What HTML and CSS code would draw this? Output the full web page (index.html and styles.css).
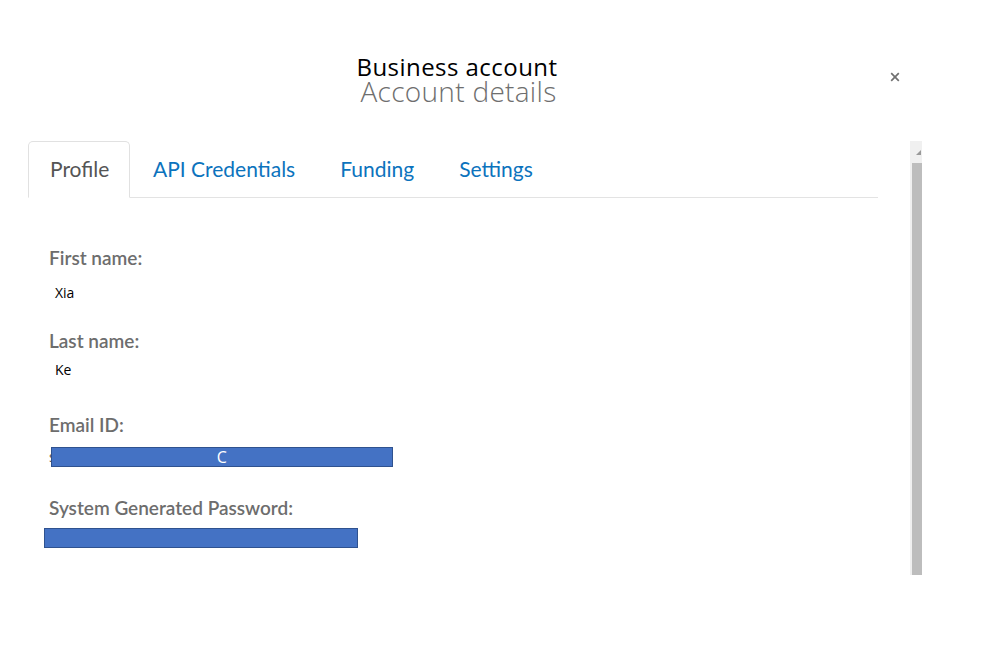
FILE: index.html
```html
<!DOCTYPE html>
<html>
<head>
<meta charset="utf-8">
<link rel="stylesheet" href="styles.css">
</head>
<body>
<div class="dialog">
  <header class="head">
    <div class="titles">
      <div class="title">Business account</div>
      <div class="subtitle">Account details</div>
    </div>
    <button class="close" aria-label="close">
      <svg width="10" height="10" viewBox="0 0 10 10"><path d="M1.2 1.2L8.8 8.8M8.8 1.2L1.2 8.8" stroke="#707070" stroke-width="1.7"/></svg>
    </button>
  </header>
  <div class="body">
    <div class="content">
      <nav class="tabs">
        <a class="tab active">Profile</a>
        <a class="tab">API Credentials</a>
        <a class="tab">Funding</a>
        <a class="tab">Settings</a>
      </nav>
      <div class="fields">
        <div class="field f1">
          <div class="label">First name:</div>
          <div class="value">Xia</div>
        </div>
        <div class="field f2">
          <div class="label">Last name:</div>
          <div class="value">Ke</div>
        </div>
        <div class="field f3">
          <div class="label">Email ID:</div>
          <div class="value email"><span class="peek">s</span><span class="redact r1">C</span><span class="peek tail">n</span></div>
        </div>
        <div class="field f4">
          <div class="label">System Generated Password:</div>
          <div class="value pw"><span class="redact r2"></span></div>
        </div>
      </div>
    </div>
    <div class="scrollbar"><div class="arrow"></div><div class="thumb"></div></div>
  </div>
</div>
</body>
</html>
```
FILE: styles.css
```css
* { box-sizing: border-box; }
html, body { margin: 0; padding: 0; background: #fff; }
body { width: 990px; height: 648px; overflow: hidden; font-family: "Open Sans", "Noto Sans", sans-serif; }

.dialog { padding: 54px 0 0 28px; }
.head { display: flex; width: 880px; height: 52px; position: relative; justify-content: center; }
.titles { display: flex; flex-direction: column; align-items: center; margin-right: 22px; }
.title { font-family: "Open Sans", sans-serif; font-size: 24px; line-height: 25px; color: #000; letter-spacing: 0.45px; }
.subtitle { font-family: "Open Sans", sans-serif; font-weight: 300; font-size: 28px; line-height: 25px; color: #6e6e6e; margin-left: 3px; letter-spacing: 0.3px; }
.close { position: absolute; right: 7px; top: 17px; border: 0; background: none; padding: 0; width: 12px; height: 12px; display: flex; align-items: center; justify-content: center; }

.body { display: flex; margin-top: 35px; }
.content { width: 850px; }
.tabs { display: flex; height: 57px; border-bottom: 1px solid #e3e3e3; }
.tab { font-family: "Lato", sans-serif; font-size: 21px; color: #0c73bd; padding: 15px 22px 0 23px; height: 57px; }
.tab.active { color: #555; border: 1px solid #e1e1e1; border-bottom: 1px solid #fff; border-radius: 5px 5px 0 0; padding: 14px 20px 0 21px; margin-bottom: -1px; background: #fff; width: 102px; }

.fields { padding: 49px 0 0 21px; }
.label { font-family: "Lato", sans-serif; font-weight: 600; font-size: 19px; line-height: 22px; color: #6d6d6d; }
.value { font-family: "Open Sans", sans-serif; font-size: 14px; line-height: 20px; color: #000; padding-left: 6px; }
.f1 .value { margin-top: 14px; }
.f1 { margin-bottom: 27px; }
.f2 .value { margin-top: 8px; }
.f2 { margin-bottom: 34px; }
.f3 .value { margin-top: 11px; }
.f3 { margin-bottom: 30px; }
.f4 .value { margin-top: 9px; }

.email { display: flex; align-items: center; padding-left: 0; height: 20px; }
.peek { color: #555; font-size: 14px; }
.redact { background: #4472c4; border: 1px solid #2f528f; color: #fff; display: flex; justify-content: center; align-items: center; font-size: 16px; }
.r1 { width: 342px; height: 20px; margin-left: -5px; position: relative; }
.tail { margin-left: -7px; position: relative; z-index: -1; }
.pw { padding-left: 0; margin-left: -5px; }
.r2 { width: 314px; height: 20px; }

.scrollbar { width: 12px; margin-left: 32px; height: 434px; display: flex; flex-direction: column; background: #f0f0f0; }
.arrow { height: 22px; position: relative; }
.arrow::after { content: ""; position: absolute; right: 1px; top: 9px; border-left: 5px solid transparent; border-bottom: 5px solid #999; }
.thumb { flex: 1; background: #bdbdbd; margin-left: 2px; }
```
